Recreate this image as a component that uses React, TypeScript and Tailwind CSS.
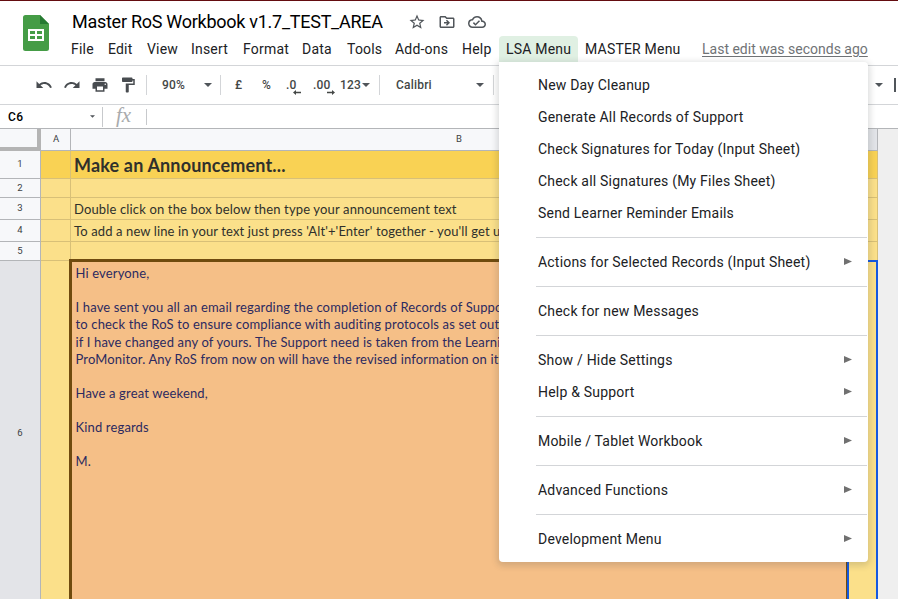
import React from "react";
import { MdStarBorder, MdOutlineDriveFileMove, MdOutlineCloudDone, MdUndo, MdRedo, MdPrint, MdFormatPaint } from "react-icons/md";

const menus = [
  { label: "File", cls: "w-[37px]" },
  { label: "Edit", cls: "w-[39px]" },
  { label: "View", cls: "w-[44px]" },
  { label: "Insert", cls: "w-[52px]" },
  { label: "Format", cls: "w-[59px]" },
  { label: "Data", cls: "w-[45px]" },
  { label: "Tools", cls: "w-[48px]" },
  { label: "Add-ons", cls: "w-[67px]" },
  { label: "Help", cls: "w-[44px]" },
  { label: "LSA Menu", cls: "w-[79px] rounded-t bg-[#e0f0e3]" },
  { label: "MASTER Menu", cls: "w-[117px]" },
];

type Item = { label: string; sub?: boolean };

const groups: Item[][] = [
  [
    { label: "New Day Cleanup" },
    { label: "Generate All Records of Support" },
    { label: "Check Signatures for Today (Input Sheet)" },
    { label: "Check all Signatures (My Files Sheet)" },
    { label: "Send Learner Reminder Emails" },
  ],
  [{ label: "Actions for Selected Records (Input Sheet)", sub: true }],
  [{ label: "Check for new Messages" }],
  [{ label: "Show / Hide Settings", sub: true }, { label: "Help & Support", sub: true }],
  [{ label: "Mobile / Tablet Workbook", sub: true }],
  [{ label: "Advanced Functions", sub: true }],
  [{ label: "Development Menu", sub: true }],
];

const message = [
  { text: "Hi everyone,", cls: "h-[34px]" },
  { text: "I have sent you all an email regarding the completion of Records of Support", cls: "h-[17px]" },
  { text: "to check the RoS to ensure compliance with auditing protocols as set out", cls: "h-[18px]" },
  { text: "if I have changed any of yours. The Support need is taken from the Learning", cls: "h-[17px]" },
  { text: "ProMonitor. Any RoS from now on will have the revised information on it", cls: "h-[34px]" },
  { text: "Have a great weekend,", cls: "h-[34px]" },
  { text: "Kind regards", cls: "h-[34px]" },
  { text: "M.", cls: "h-[17px]" },
];

function Caret({ className = "" }: { className?: string }) {
  return (
    <svg viewBox="0 0 8 4" className={"h-1 w-2 shrink-0 fill-[#50555a] " + className}>
      <path d="M0 0h8L4 4z" />
    </svg>
  );
}

function Row({ n, height, fill = "bg-[#fbe08a]", children }: { n: string; height: string; fill?: string; children?: React.ReactNode }) {
  return (
    <div className={"flex " + height}>
      <div className="flex w-[41px] shrink-0 items-center justify-center border-r border-b border-[#b3b5b8] bg-[#f7f8fa] font-['Roboto',sans-serif] text-[9.500px] text-[#3c4043]">{n}</div>
      <div className={"w-[30px] shrink-0 border-r border-b border-[#d8c077] " + fill} />
      <div className={"flex w-[776px] shrink-0 items-end overflow-hidden border-b border-[#d8c077] pl-[3px] whitespace-nowrap " + fill}>{children}</div>
      <div className={"w-[31px] shrink-0 border-r border-b border-[#d8c077] " + fill} />
    </div>
  );
}

function Decimal({ label, right }: { label: string; right?: boolean }) {
  return (
    <span className="relative">
      {label}
      <svg viewBox="0 0 8 5" className={"absolute -right-1 -bottom-[3px] h-[5px] w-2 fill-[#444746] " + (right ? "-scale-x-100" : "")}>
        <path d="M0 2.5 3 0v1.8h5v1.4H3V5z" />
      </svg>
    </span>
  );
}

export default function App() {
  return (
    <div className="relative flex h-[599px] w-[898px] flex-col overflow-hidden bg-white font-['Roboto',sans-serif] text-[#202124]">
      <header className="flex h-[66px] shrink-0 border-t border-b border-t-[#640c10] border-b-[#d3d5d8]">
        <svg viewBox="0 0 26 36" className="mt-[14px] ml-[23px] h-9 w-[26px] shrink-0">
          <path d="M2.5 0H17l9 9v24.500a2.500 2.500 0 0 1-2.500 2.500h-21A2.500 2.500 0 0 1 0 33.500v-31A2.500 2.500 0 0 1 2.500 0z" fill="#459c46" />
          <path d="M17 0l9 9h-9z" fill="#267a32" />
          <path fillRule="evenodd" d="M5 14h16v12H5zM7 16v3h5v-3zM14 16v3h5v-3zM7 21v3h5v-3zM14 21v3h5v-3z" fill="#fff" />
        </svg>
        <div className="ml-[15px] flex flex-col">
          <div className="flex h-[35px] items-center pt-[6px] pl-2">
            <h1 className="w-[336px] text-[18px] tracking-[-0.27px] whitespace-nowrap text-black">Master RoS Workbook v1.7_TEST_AREA</h1>
            <div className="flex items-center gap-3 text-[18px] text-[#50555a]">
              <MdStarBorder />
              <MdOutlineDriveFileMove />
              <MdOutlineCloudDone />
            </div>
          </div>
          <nav className="flex h-[26px] text-[14px] tracking-[0.2px] whitespace-nowrap">
            {menus.map((m) => (
              <span key={m.label} className={"flex shrink-0 items-center pl-[7px] " + m.cls}>{m.label}</span>
            ))}
            <span className="flex items-center pl-[7px] tracking-normal text-[#707376] underline underline-offset-2">Last edit was seconds ago</span>
          </nav>
        </div>
      </header>

      <div className="flex h-[39px] shrink-0 items-center border-b border-[#d3d5d8] text-[12px] font-medium tracking-[0.2px] text-[#444746]">
        <div className="ml-[35px] flex gap-[10px] text-[18px] text-[#484c50]">
          <MdUndo />
          <MdRedo />
          <MdPrint />
          <MdFormatPaint />
        </div>
        <div className="ml-[9px] h-5 w-px bg-[#d3d5d8]" />
        <span className="w-[57px] pl-[15px]">90%</span>
        <Caret />
        <div className="ml-2 h-5 w-px bg-[#d3d5d8]" />
        <span className="w-[41px] pl-[14px]">£</span>
        <span className="w-[24px]">%</span>
        <span className="w-[27px]"><Decimal label=".0" /></span>
        <span className="w-[27px]"><Decimal label=".00" right /></span>
        <span className="w-[22px]">123</span>
        <Caret />
        <div className="ml-[9px] h-5 w-px bg-[#d3d5d8]" />
        <span className="w-[96px] pl-4">Calibri</span>
        <Caret />
        <div className="ml-[9px] h-5 w-px bg-[#d3d5d8]" />
        <Caret className="ml-auto" />
        <div className="mr-[2px] ml-[11px] h-[14px] w-[2px] bg-[#50555a]" />
      </div>

      <div className="flex h-6 shrink-0 items-center border-b border-[#b3b5b8] text-[12px] font-medium text-black">
        <span className="w-[90px] pl-2 tracking-[0.3px]">C6</span>
        <Caret className="h-[3px] w-[5px]" />
        <div className="ml-[7px] h-5 w-px bg-[#c7c9cc]" />
        <span className="w-[43px] pl-[13px] pb-1 font-['Liberation_Serif',serif] text-[21px] leading-5 font-normal text-[#a9abad] italic">fx</span>
        <div className="h-4 w-px bg-[#c7c9cc]" />
      </div>

      <main className="flex grow bg-[#efefef]">
        <div className="flex w-[878px] shrink-0 flex-col">
          <div className="flex h-[22px] shrink-0 text-[9.500px] text-[#3c4043]">
            <div className="w-[41px] border-r-4 border-b-4 border-[#b4b4b4] bg-[#f7f8fa]" />
            <div className="flex w-[30px] items-center justify-center border-r border-b border-[#b3b5b8] bg-[#f7f8fa] pl-px">A</div>
            <div className="flex w-[777px] items-center justify-center border-r border-b border-[#b3b5b8] bg-[#f7f8fa]">B</div>
            <div className="w-[30px] border-r border-b border-[#b3b5b8] bg-[#e2e4e8]" />
          </div>
          <div className="font-['Lato',sans-serif] text-[#2f302c] [font-variant-ligatures:none]">
            <Row n="1" height="h-[28px]" fill="bg-[#f9d254]">
              <span className="text-[18px] leading-[25px] font-bold tracking-[0.16px]">Make an Announcement...</span>
            </Row>
            <Row n="2" height="h-[19px]" />
            <Row n="3" height="h-[22px]">
              <span className="text-[13px] leading-[20px] tracking-[0.15px]">Double click on the box below then type your announcement text</span>
            </Row>
            <Row n="4" height="h-[22px]">
              <span className="text-[13px] leading-[20px] tracking-[0.12px]">To add a new line in your text just press 'Alt'+'Enter' together - you'll get used</span>
            </Row>
            <Row n="5" height="h-[19px]" />
          </div>
          <div className="flex grow">
            <div className="flex w-[41px] shrink-0 justify-center border-r border-[#b3b5b8] bg-[#e3e4e8] pt-[165px] text-[9.500px] text-[#3c4043]">6</div>
            <div className="w-[28px] shrink-0 bg-[#fbe08a]" />
            <div className="-mt-[2px] w-[778px] shrink-0 overflow-hidden border-t-[3px] border-r border-l-[3px] border-[#6f4b0e] bg-[#f5bf87] pt-[3px] pl-[3.500px] font-['Lato',sans-serif] text-[13px] leading-[17px] tracking-[0.15px] whitespace-nowrap text-[#2c2a60] [font-variant-ligatures:none]">
              {message.map((line) => (
                <p key={line.text} className={line.cls}>{line.text}</p>
              ))}
            </div>
            <div className="-mt-px grow border-2 border-b-0 border-[#1558e0] bg-[#fbe08a]" />
          </div>
        </div>
      </main>

      <div className="absolute top-[62px] left-[499px] w-[369px] rounded-tr rounded-b bg-white py-[7px] text-[14px] tracking-[0.2px] shadow-[0_2px_6px_2px_rgba(60,64,67,0.18)]">
        {groups.map((group, i) => (
          <React.Fragment key={group[0].label}>
            {i > 0 && <div className="my-2 mr-px ml-[37px] h-px bg-[#d3d5d8]" />}
            {group.map((item) => (
              <div key={item.label} className="flex h-8 items-center justify-between pr-4 pl-[39px]">
                <span>{item.label}</span>
                {item.sub && (
                  <svg viewBox="0 0 8 7" className="mb-px h-[7px] w-2 fill-[#707070]">
                    <path d="M0 0l8 3.500L0 7z" />
                  </svg>
                )}
              </div>
            ))}
          </React.Fragment>
        ))}
      </div>
    </div>
  );
}
